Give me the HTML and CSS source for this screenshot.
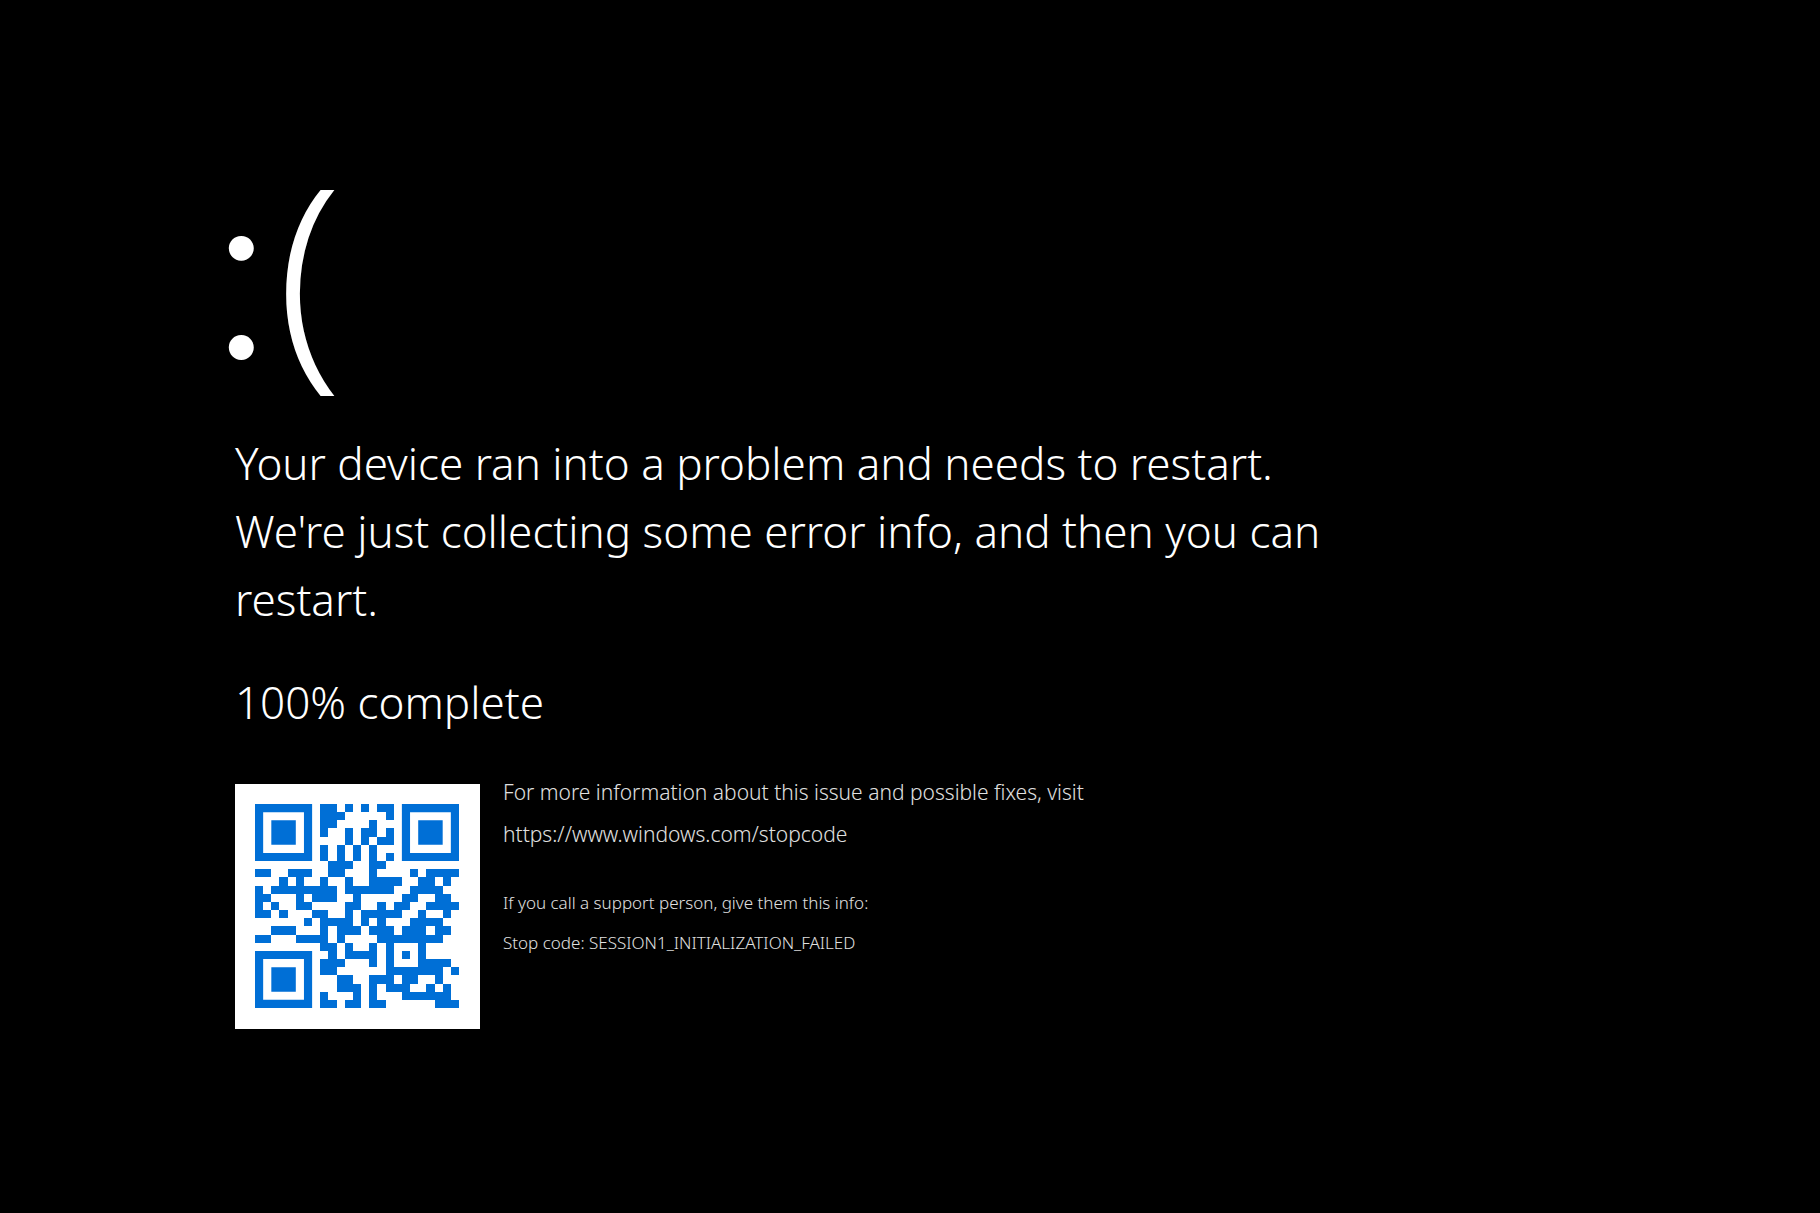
FILE: index.html
```html
<!DOCTYPE html>
<html lang="en">
<head>
<meta charset="utf-8">
<meta name="viewport" content="width=device-width, initial-scale=1">
<title>Your device ran into a problem</title>
<link rel="stylesheet" href="styles.css">
</head>
<body>
<main class="screen">
  <div class="face"><span class="eyes">:</span><span class="mouth">(</span></div>
  <h1 class="message">Your device ran into a problem and needs to restart. We're just collecting some error info, and then you can restart.</h1>
  <p class="progress">100% complete</p>
  <section class="details">
    <svg class="qr" viewBox="0 0 25 25" role="img" aria-label="QR code">
      <!-- finder patterns -->
      <path fill-rule="evenodd" d="M0 0h7v7h-7zM1 1v5h5v-5zM2 2h3v3h-3zM18 0h7v7h-7zM19 1v5h5v-5zM20 2h3v3h-3zM0 18h7v7h-7zM1 19v5h5v-5zM2 20h3v3h-3z"/>
      <!-- data modules, one line per row -->
      <path class="modules" d="
        M8 0h2v1h-2zM11 0h1v1h-1zM13 0h1v1h-1zM15 0h2v1h-2z
        M8 1h3v1h-3zM16 1h1v1h-1z
        M8 2h2v1h-2zM14 2h1v1h-1z
        M8 3h1v1h-1zM11 3h1v1h-1zM13 3h2v1h-2zM16 3h1v1h-1z
        M11 4h1v1h-1zM13 4h1v1h-1zM15 4h2v1h-2z
        M8 5h1v1h-1zM10 5h1v1h-1zM12 5h1v1h-1zM14 5h1v1h-1z
        M8 6h1v1h-1zM10 6h1v1h-1zM12 6h1v1h-1zM14 6h1v1h-1zM16 6h1v1h-1z
        M9 7h3v1h-3zM14 7h2v1h-2z
        M0 8h2v1h-2zM4 8h3v1h-3zM9 8h2v1h-2zM14 8h1v1h-1zM19 8h1v1h-1zM21 8h4v1h-4z
        M3 9h1v1h-1zM5 9h1v1h-1zM8 9h1v1h-1zM11 9h1v1h-1zM14 9h4v1h-4zM20 9h2v1h-2zM23 9h1v1h-1z
        M0 10h1v1h-1zM2 10h8v1h-8zM11 10h6v1h-6zM19 10h4v1h-4z
        M0 11h2v1h-2zM5 11h1v1h-1zM7 11h3v1h-3zM12 11h1v1h-1zM18 11h2v1h-2zM22 11h2v1h-2z
        M0 12h1v1h-1zM2 12h1v1h-1zM5 12h2v1h-2zM11 12h2v1h-2zM15 12h1v1h-1zM17 12h2v1h-2zM21 12h4v1h-4z
        M0 13h2v1h-2zM3 13h1v1h-1zM7 13h2v1h-2zM11 13h1v1h-1zM13 13h5v1h-5zM20 13h1v1h-1zM23 13h1v1h-1z
        M6 14h1v1h-1zM8 14h4v1h-4zM13 14h1v1h-1zM15 14h1v1h-1zM19 14h4v1h-4z
        M2 15h3v1h-3zM8 15h1v1h-1zM10 15h3v1h-3zM14 15h3v1h-3zM18 15h3v1h-3zM22 15h2v1h-2z
        M0 16h2v1h-2zM5 16h4v1h-4zM10 16h1v1h-1zM15 16h8v1h-8z
        M8 17h2v1h-2zM11 17h1v1h-1zM14 17h1v1h-1zM16 17h1v1h-1zM20 17h1v1h-1z
        M9 18h1v1h-1zM11 18h4v1h-4zM16 18h1v1h-1zM18 18h1v1h-1zM20 18h1v1h-1z
        M8 19h3v1h-3zM14 19h1v1h-1zM16 19h1v1h-1zM20 19h4v1h-4z
        M8 20h2v1h-2zM16 20h7v1h-7zM24 20h1v1h-1z
        M10 21h2v1h-2zM14 21h3v1h-3zM18 21h2v1h-2zM22 21h1v1h-1z
        M10 22h3v1h-3zM14 22h1v1h-1zM16 22h3v1h-3zM21 22h1v1h-1zM23 22h1v1h-1z
        M8 23h1v1h-1zM12 23h1v1h-1zM14 23h1v1h-1zM18 23h6v1h-6z
        M8 24h2v1h-2zM11 24h2v1h-2zM14 24h2v1h-2zM22 24h3v1h-3z"/>
    </svg>
    <div class="info">
      <p class="more">For more information about this issue and possible fixes, visit<br><a class="link" href="https://www.windows.com/stopcode">https://www.windows.com/stopcode</a></p>
      <p class="support">If you call a support person, give them this info:<br>Stop code: SESSION1_INITIALIZATION_FAILED</p>
    </div>
  </section>
</main>
</body>
</html>
```
FILE: styles.css
```css
* {
  box-sizing: border-box;
}

body {
  margin: 0;
  background: #000;
  color: #fff;
  font-family: "Noto Sans", "Open Sans", sans-serif;
  font-weight: 300;
}

.screen {
  max-width: 1355px;
  padding: 144px 0 64px 235px;
}

.face {
  display: flex;
  align-items: baseline;
  gap: 2px;
  margin-left: -27px;
  font-size: 236px;
  line-height: 248px;
}

.eyes {
  font-family: Inter, sans-serif;
}

.message,
.progress {
  margin: 0;
  font-size: 44px;
  font-weight: 300;
  line-height: 68px;
}

.message {
  margin-top: 32px;
}

.progress {
  margin-top: 35px;
}

.details {
  display: flex;
  gap: 23px;
  margin-top: 48px;
}

.qr {
  flex: none;
  width: 245px;
  height: 245px;
  padding: 20px 21px 21px 20px;
  background: #fff;
  fill: #006fd6;
}

.modules {
  shape-rendering: crispEdges;
}

.info {
  margin-top: -13px;
  color: #e0e0e0;
}

.info p {
  margin: 0;
}

.more {
  font-size: 21px;
  line-height: 42px;
}

.support {
  padding-top: 28px;
  font-size: 17px;
  line-height: 40px;
}

.link {
  color: inherit;
  text-decoration: none;
}
```
